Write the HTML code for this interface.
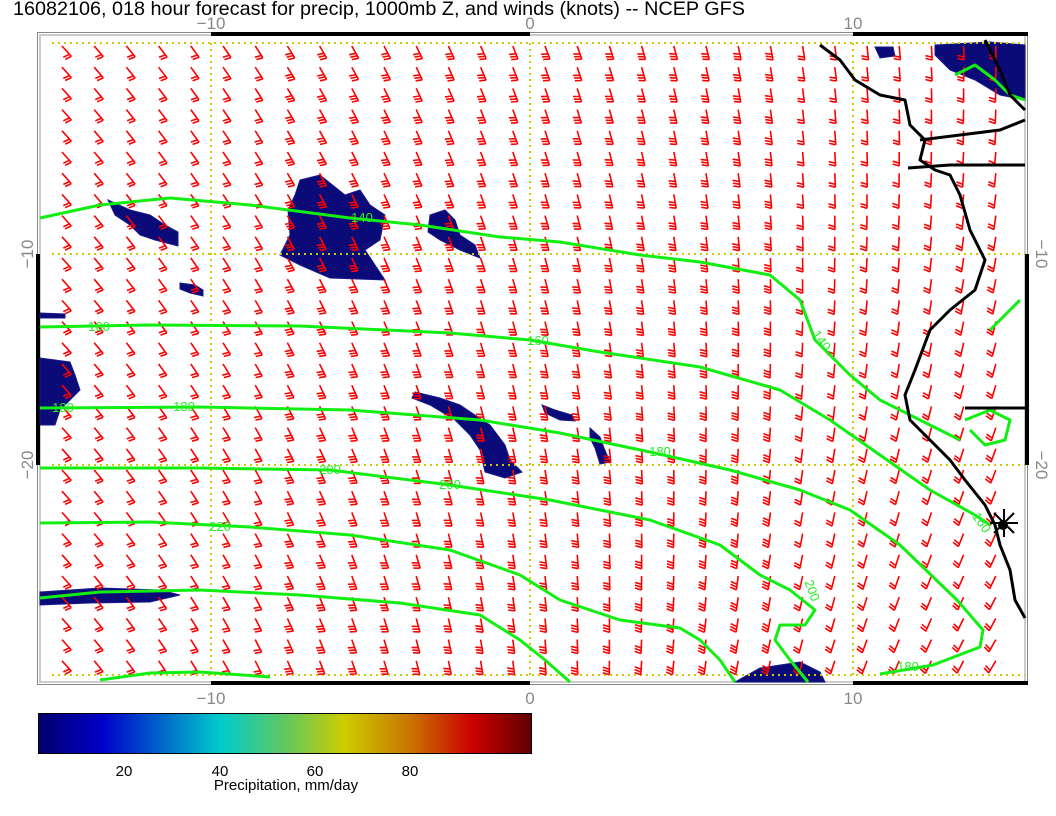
<!DOCTYPE html>
<html><head><meta charset="utf-8"><style>
body{margin:0;background:#fff;width:1056px;height:816px;overflow:hidden}
svg{display:block;font-family:"Liberation Sans",sans-serif}
</style></head><body>
<svg id="s" width="1056" height="816" viewBox="0 0 1056 816" xmlns="http://www.w3.org/2000/svg">
<text x="13" y="15" font-size="19.8" fill="#000">16082106, 018 hour forecast for precip, 1000mb Z, and winds (knots) -- NCEP GFS</text>
<g font-size="17" fill="#888" text-anchor="middle">
<text x="211" y="29">−10</text><text x="530" y="29">0</text><text x="853" y="29">10</text>
<text x="211" y="704">−10</text><text x="530" y="704">0</text><text x="853" y="704">10</text>
<text transform="translate(33,254) rotate(-90)">−10</text>
<text transform="translate(33,465) rotate(-90)">−20</text>
<text transform="translate(1036,254) rotate(90)">−10</text>
<text transform="translate(1036,465) rotate(90)">−20</text>
</g>
<rect x="37.5" y="32.5" width="990" height="652" fill="#fff" stroke="#888" stroke-width="1"/>
<rect x="40" y="35" width="985" height="647" fill="none" stroke="#ccc" stroke-width="2"/>
<g fill="#000">
<rect x="211" y="32" width="319" height="4"/><rect x="853" y="32" width="175" height="4"/>
<rect x="211" y="681" width="319" height="4"/><rect x="853" y="681" width="175" height="4"/>
<rect x="36" y="254" width="4" height="211"/><rect x="1025" y="254" width="4" height="211"/>
</g>
<g id="precip" fill="#0a0a78" stroke="#1a1a8a" stroke-width="1">
<polygon points="300,180 320,175 345,195 360,190 370,205 385,215 380,240 365,250 375,265 385,280 330,278 300,265 280,255 290,235 288,210 295,195"/>
<polygon points="108,200 130,210 150,215 165,225 178,232 178,246 155,240 140,235 130,225 115,215"/>
<polygon points="430,215 445,210 455,220 460,235 475,245 480,258 460,250 440,240 428,232"/>
<polygon points="180,283 195,285 203,290 203,296 190,293 180,289"/>
<polygon points="40,358 70,362 75,375 80,390 70,400 60,410 55,425 40,425"/>
<polygon points="40,313 65,314 65,318 40,318"/>
<polygon points="415,392 440,398 460,405 475,415 490,425 505,445 510,460 522,472 505,478 485,472 480,450 470,435 455,420 430,405 412,398"/>
<polygon points="542,405 555,410 572,415 575,421 560,420 545,413"/>
<polygon points="590,428 600,437 604,448 610,462 600,464 595,448 590,438"/>
<polygon points="40,592 100,588 160,590 180,595 150,602 90,603 40,605"/>
<polygon points="735,682 760,668 800,662 820,672 825,682"/>
<polygon points="935,45 990,42 1025,45 1025,100 1000,95 975,80 950,70 935,55"/>
<polygon points="875,47 893,47 895,56 880,58"/>
</g>
<g stroke="#cccc00" stroke-width="2" stroke-dasharray="2,4" fill="none">
<line x1="52" y1="43" x2="1025" y2="43"/><line x1="52" y1="254" x2="1025" y2="254"/>
<line x1="52" y1="465" x2="1025" y2="465"/><line x1="52" y1="675" x2="1025" y2="675"/>
<line x1="211" y1="43" x2="211" y2="675"/><line x1="530" y1="43" x2="530" y2="675"/><line x1="853" y1="43" x2="853" y2="675"/>
</g>
<g id="barbs" stroke="#f00" stroke-width="1.6" fill="none"></g>
<g stroke="#11ee11" stroke-width="3" fill="none" stroke-linejoin="round">
<polyline points="40,218 100,205 170,198 250,205 350,218 420,225 500,237 560,242 640,255 700,262 770,275 800,300 815,340 850,375 880,400 920,420 960,440"/>
<polyline points="40,327 150,325 300,326 450,333 530,340 600,352 700,367 780,390 830,420 880,455 930,490 975,515 990,525"/>
<polyline points="40,408 200,407 350,410 480,420 560,433 650,452 730,470 800,490 850,510 900,545 957,600 983,630 980,647 933,665 880,674"/>
<polyline points="40,468 200,468 330,470 450,485 550,500 650,520 720,545 760,575 790,590 815,610 805,625 780,625 775,640 790,660 808,682"/>
<polyline points="40,523 150,522 250,527 350,535 450,550 520,575 560,600 620,620 680,628 700,640 720,660 735,682"/>
<polyline points="40,598 100,592 200,590 300,595 400,603 480,615 520,640 545,660 570,682"/>
<polyline points="100,680 150,673 200,672 270,677"/>
<polyline points="955,75 975,65 995,80 1010,95 1025,100"/>
<polyline points="965,420 990,410 1010,420 1005,440 985,445 970,430"/>
<polyline points="990,330 1010,310 1020,300"/>
</g>
<g font-size="13" fill="#22ee22" text-anchor="middle">
<text x="362" y="222">140</text><text x="99" y="331">160</text><text x="538" y="345">160</text>
<text x="63" y="412">180</text><text x="184" y="411">180</text><text x="660" y="456">180</text>
<text x="330" y="474">200</text><text x="450" y="489">200</text><text x="220" y="531">220</text>
<text x="908" y="671">180</text><text x="818" y="343" transform="rotate(55 818 343)">140</text>
<text x="978" y="525" transform="rotate(55 978 525)">160</text>
<text x="808" y="592" transform="rotate(70 808 592)">200</text>
</g>
<g stroke="#000" stroke-width="3" fill="none" stroke-linejoin="round">
<polyline points="820,45 840,60 855,80 880,95 905,100 910,125 925,140 920,160 935,170 950,175 960,195 970,230 985,260 975,290 950,310 930,330 915,370 905,395 910,420 930,440 950,460 965,480 985,505 995,525 1000,545 1010,570 1015,600 1025,618"/>
<polyline points="908,168 950,165 1025,165"/>
<polyline points="965,408 1025,408"/>
<polyline points="985,40 1000,70 1010,95 1025,110"/>
<polyline points="920,140 1000,130 1025,120"/>
</g>
<g stroke="#000" stroke-width="2">
<line x1="990" y1="523" x2="1018" y2="523"/><line x1="1004" y1="509" x2="1004" y2="537"/>
<line x1="994" y1="513" x2="1014" y2="533"/><line x1="1014" y1="513" x2="994" y2="533"/>
<circle cx="1003" cy="525" r="4" fill="#000"/>
</g>
<defs><linearGradient id="cb" x1="0" x2="1" y1="0" y2="0">
<stop offset="0" stop-color="#00006e"/><stop offset="0.13" stop-color="#0000c8"/>
<stop offset="0.37" stop-color="#00cccc"/><stop offset="0.5" stop-color="#60c860"/>
<stop offset="0.62" stop-color="#cccc00"/><stop offset="0.75" stop-color="#c87800"/>
<stop offset="0.88" stop-color="#cc0000"/><stop offset="1" stop-color="#600000"/>
</linearGradient></defs>
<rect x="38.5" y="713.5" width="493" height="40" fill="url(#cb)" stroke="#000"/>
<g font-size="15" fill="#000" text-anchor="middle">
<text x="124" y="776">20</text><text x="220" y="776">40</text><text x="315" y="776">60</text><text x="410" y="776">80</text>
<text x="286" y="790">Precipitation, mm/day</text>
</g>
</svg>
<script>
var g=document.getElementById('barbs'),h='';
for(var r=0;r<30;r++){for(var c=0;c<30;c++){
var x=62+c*32.2,y=46+r*21.2;
var u=(x-60)/900,v=(y-50)/620;
var a=(42-40*u-30*u*v)*Math.PI/180;
var sx=Math.sin(a),sy=Math.cos(a),L=14;
var x2=x+sx*L,y2=y+sy*L;
var px=-sy,py=sx;
var n=(u>0.25&&u<0.8)?3:2;
var d='M'+x.toFixed(1)+' '+y.toFixed(1)+'L'+x2.toFixed(1)+' '+y2.toFixed(1);
for(var k=0;k<n;k++){var bx=x2-sx*k*2.8,by=y2-sy*k*2.8;
d+='M'+bx.toFixed(1)+' '+by.toFixed(1)+'l'+(px*6.5-sx*2).toFixed(1)+' '+(py*6.5-sy*2).toFixed(1);}
h+='<path d="'+d+'"/>';}}
g.innerHTML=h;
</script>
</body></html>
